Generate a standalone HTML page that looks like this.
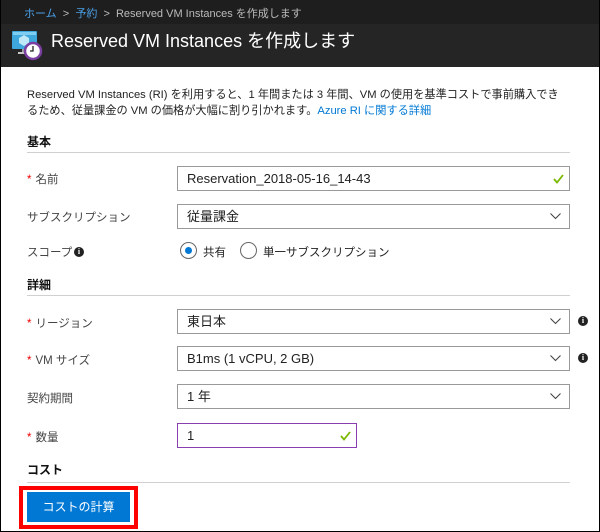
<!DOCTYPE html>
<html><head><meta charset="utf-8"><style>
*{margin:0;padding:0;box-sizing:border-box}
body{width:600px;height:532px;overflow:hidden;background:#fff;font-family:"Liberation Sans","Noto Sans CJK JP",sans-serif;font-size:12px;color:#333;position:relative}
.frame{position:absolute;left:0;top:0;width:600px;height:532px;border:1px solid #000;border-top:none}
.bc{position:absolute;left:0;top:0;width:600px;height:24px;background:#1e1e1e;color:#bbb;font-size:11px;line-height:28px;padding-left:24px;white-space:nowrap}
.bc a{color:#4aa0e6}
.tt{position:absolute;left:0;top:24px;width:600px;height:43px;background:#252525;color:#fff;font-size:18px;line-height:34px;padding-left:51px;white-space:nowrap}
.abs{position:absolute;white-space:nowrap}
.desc{left:27px;top:87px;line-height:16px;font-size:11.2px;color:#222}
.desc a{color:#0078d4}
.sec{left:27px;font-weight:bold;font-size:12px;color:#111}
.line{position:absolute;left:27px;width:543px;height:1px;background:#d0d0d0}
.lbl{left:27px;font-size:11.5px;color:#444}
.star{color:#e00;margin-right:4px}
.inp{position:absolute;left:177px;width:393px;height:25px;border:1px solid #999;font-size:13px;line-height:23px;padding-left:9px;color:#222}
.chev{position:absolute;right:8px;top:7px}
.chk{position:absolute;right:5px;top:7px}
.info{position:absolute;width:10px;height:10px;border-radius:50%;background:#222;color:#fff;font-size:8px;line-height:10px;text-align:center;font-weight:bold;font-family:"Liberation Serif",serif}
.radio{position:absolute;width:17px;height:17px;border:1px solid #666;border-radius:50%}
</style></head><body>
<div class="bc"><a>ホーム</a> &nbsp;&gt;&nbsp; <a>予約</a> &nbsp;&gt;&nbsp; Reserved VM Instances を作成します</div>
<div class="tt">Reserved VM Instances を作成します</div>
<svg class="abs" style="left:10px;top:29px" width="34" height="34" viewBox="0 0 34 34">
<rect x="2" y="2" width="25" height="18" rx="1" fill="#3ea7dc"/><rect x="3" y="3" width="23" height="3" fill="#7fcdf0"/>
<rect x="12" y="20" width="5" height="3" fill="#a0a0a0"/><rect x="8" y="23" width="13" height="2" fill="#c8c8c8"/>
<path d="M14 6 l5 3 v5 l-5 3 l-5-3 v-5z" fill="#bfe8f8"/>
<circle cx="23" cy="22" r="8" fill="#fff" stroke="#7a3fa0" stroke-width="2.5"/>
<path d="M23 17v5h-3" stroke="#222" stroke-width="1.3" fill="none"/>
</svg>
<div class="abs desc">Reserved VM Instances (RI) を利用すると、1 年間または 3 年間、VM の使用を基準コストで事前購入でき<br>るため、従量課金の VM の価格が大幅に割り引かれます。<a>Azure RI に関する詳細</a></div>

<div class="abs sec" style="top:133px">基本</div><div class="line" style="top:152px"></div>
<div class="abs lbl" style="top:171px"><span class="star">*</span>名前</div>
<div class="inp" style="top:166px">Reservation_2018-05-16_14-43<svg class="chk" width="11" height="10" viewBox="0 0 11 10"><path d="M1 5l3 3.5L10 1" stroke="#7ab800" stroke-width="1.8" fill="none"/></svg></div>
<div class="abs lbl" style="top:209px">サブスクリプション</div>
<div class="inp" style="top:204px">従量課金<svg class="chev" width="11" height="8" viewBox="0 0 11 8"><path d="M.5 1.5l5 5 5-5" stroke="#444" stroke-width="1.1" fill="none"/></svg></div>
<div class="abs lbl" style="top:244px">スコープ</div><div class="info" style="left:74px;top:247px">i</div>
<div class="radio" style="left:180px;top:242px"><div style="position:absolute;left:4px;top:4px;width:7px;height:7px;border-radius:50%;background:#0078d4"></div></div>
<div class="abs" style="left:203px;top:244px;color:#222;font-size:11.5px">共有</div>
<div class="radio" style="left:240px;top:242px"></div>
<div class="abs" style="left:263px;top:244px;color:#222;font-size:11.5px">単一サブスクリプション</div>

<div class="abs sec" style="top:276px">詳細</div><div class="line" style="top:295px"></div>
<div class="abs lbl" style="top:315px"><span class="star">*</span>リージョン</div>
<div class="inp" style="top:309px">東日本<svg class="chev" width="11" height="8" viewBox="0 0 11 8"><path d="M.5 1.5l5 5 5-5" stroke="#444" stroke-width="1.1" fill="none"/></svg></div><div class="info" style="left:578px;top:316px">i</div>
<div class="abs lbl" style="top:352px"><span class="star">*</span>VM サイズ</div>
<div class="inp" style="top:346px">B1ms (1 vCPU, 2 GB)<svg class="chev" width="11" height="8" viewBox="0 0 11 8"><path d="M.5 1.5l5 5 5-5" stroke="#444" stroke-width="1.1" fill="none"/></svg></div><div class="info" style="left:578px;top:353px">i</div>
<div class="abs lbl" style="top:390px">契約期間</div>
<div class="inp" style="top:384px">1 年<svg class="chev" width="11" height="8" viewBox="0 0 11 8"><path d="M.5 1.5l5 5 5-5" stroke="#444" stroke-width="1.1" fill="none"/></svg></div>
<div class="abs lbl" style="top:429px"><span class="star">*</span>数量</div>
<div class="inp" style="top:423px;width:180px;border-color:#8a3fb0">1<svg class="chk" width="11" height="10" viewBox="0 0 11 10"><path d="M1 5l3 3.5L10 1" stroke="#7ab800" stroke-width="1.8" fill="none"/></svg></div>

<div class="abs sec" style="top:461px">コスト</div><div class="line" style="top:482px"></div>
<div class="abs" style="left:19px;top:486px;width:119px;height:43px;border:4px solid #f00"></div>
<div class="abs" style="left:27px;top:492px;width:103px;height:30px;background:#0078d4;color:#fff;text-align:center;line-height:30px;font-size:12px">コストの計算</div>
<div class="frame"></div>
</body></html>
